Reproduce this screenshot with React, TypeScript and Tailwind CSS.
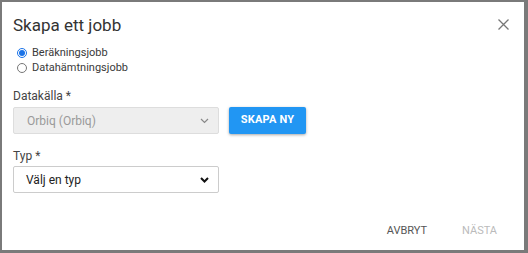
import React from "react";

function Chevron({ color, thick }: { color: string; thick?: boolean }) {
  return (
    <svg width="9" height="6" viewBox="0 0 9 6" className="absolute right-[9px] top-1/2 -translate-y-1/2 pointer-events-none">
      <path d="M1 1 L4.5 4.5 L8 1" fill="none" stroke={color} strokeWidth={thick ? 2 : 1.2} />
    </svg>
  );
}

export default function App() {
  return (
    <div
      className="w-[528px] h-[253px] bg-[#7a7a7a] pt-[2px] pl-[2px] pr-[4px] pb-[3px]"
      style={{ fontFamily: "Roboto, 'Liberation Sans', sans-serif" }}
    >
      <div className="relative w-full h-full bg-white flex flex-col pl-[11px] pr-[20px]">
        <div className="pt-[13px] h-[43px] text-[17px] leading-[20px] text-[#333]">Skapa ett jobb</div>
        <button className="absolute right-[15px] top-[16px] w-[12px] h-[12px] flex items-center justify-center">
          <svg width="11" height="11" viewBox="0 0 11 11">
            <path d="M0.5 0.5 L10.5 10.5 M10.5 0.5 L0.5 10.5" stroke="#777" strokeWidth="1.3" />
          </svg>
        </button>
        <div className="flex flex-col pl-[4px] text-[11px] leading-[15px] text-[#3a3a3a]">
          <label className="flex items-center gap-[5px]">
            <input type="radio" name="jobb" defaultChecked className="w-[10px] h-[10px] m-0 accent-[#1a73e8]" />
            Beräkningsjobb
          </label>
          <label className="flex items-center gap-[5px]">
            <input type="radio" name="jobb" className="w-[10px] h-[10px] m-0 accent-[#1a73e8]" />
            Datahämtningsjobb
          </label>
        </div>
        <div className="mt-[13px] text-[12px] leading-[16px] text-[#444]">Datakälla *</div>
        <div className="mt-[3px] flex items-center gap-[10px]">
          <div className="relative w-[206px] h-[27px] bg-[#eeeeee] border border-[#dddddd] rounded-[2px] flex items-center pl-[13px] text-[12px] text-[#9a9a9a]">
            Orbiq (Orbiq)
            <Chevron color="#888" />
          </div>
          <button className="w-[77px] h-[27px] bg-[#2196f3] text-white text-[11px] font-bold rounded-[2px] shadow-[0_1px_3px_rgba(0,0,0,0.35)] tracking-[0.2px]">
            SKAPA NY
          </button>
        </div>
        <div className="mt-[14px] text-[12px] leading-[16px] text-[#444]">Typ *</div>
        <div className="mt-[2px] relative w-[206px] h-[27px] bg-white border border-[#cccccc] rounded-[2px] flex items-center pl-[12px] text-[12px] text-[#222]">
          Välj en typ
          <Chevron color="#111" thick />
        </div>
        <div className="mt-auto mb-[11px] flex justify-end gap-[35px] pr-[7px] text-[11px] font-normal">
          <span className="text-[#555]">AVBRYT</span>
          <span className="text-[#bbbbbb]">NÄSTA</span>
        </div>
      </div>
    </div>
  );
}
